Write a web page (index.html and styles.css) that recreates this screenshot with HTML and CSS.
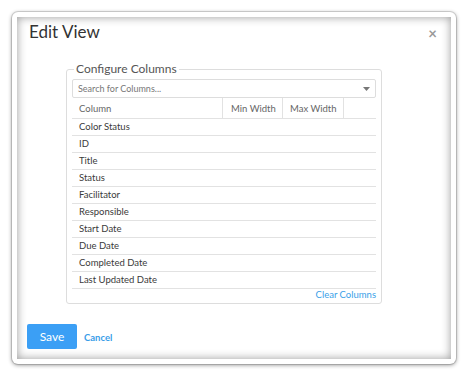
FILE: index.html
```html
<!DOCTYPE html>
<html>
<head>
<meta charset="utf-8">
<link rel="stylesheet" href="styles.css">
</head>
<body>
<div class="frame">
  <div class="modal">
    <div class="modal-header">
      <h1 class="title">Edit View</h1>
      <span class="close">&times;</span>
    </div>
    <div class="modal-body">
      <fieldset class="config">
        <legend class="legend">Configure Columns</legend>
        <div class="search">
          <span class="placeholder">Search for Columns...</span>
          <svg class="caret" width="7" height="4" viewBox="0 0 7 4"><path d="M0 0H7L3.5 4Z" fill="#777"/></svg>
        </div>
        <div class="thead">
          <div class="th th-col">Column</div>
          <div class="th th-min">Min Width</div>
          <div class="th th-max">Max Width</div>
          <div class="th th-end"></div>
        </div>
        <div class="row">Color Status</div>
        <div class="row">ID</div>
        <div class="row">Title</div>
        <div class="row">Status</div>
        <div class="row">Facilitator</div>
        <div class="row">Responsible</div>
        <div class="row">Start Date</div>
        <div class="row">Due Date</div>
        <div class="row">Completed Date</div>
        <div class="row">Last Updated Date</div>
        <div class="clear-wrap"><a class="clear">Clear Columns</a></div>
      </fieldset>
    </div>
    <div class="modal-footer">
      <button class="btn-save">Save</button>
      <a class="cancel">Cancel</a>
    </div>
  </div>
</div>
</body>
</html>
```
FILE: styles.css
```css
html, body {
  margin: 0;
  padding: 0;
  background: #ffffff;
}
body {
  padding: 12px;
  font-family: Lato, "Open Sans", sans-serif;
  color: #444;
}
.frame {
  width: 444px;
  height: 352px;
  box-sizing: border-box;
  background: #fff;
  border-radius: 6px;
  padding: 5px;
  box-shadow: 0 0 0 1px rgba(0,0,0,0.12), 0 1px 4px rgba(0,0,0,0.45);
}
.modal {
  height: 342px;
  box-sizing: border-box;
  background: #fff;
  box-shadow: inset 0 0 10px rgba(0,0,0,0.4);
  display: flex;
  flex-direction: column;
}
.modal-header {
  display: flex;
  justify-content: space-between;
  align-items: center;
  padding: 4px 14px 0 12px;
  height: 22px;
}
.title {
  margin: 0;
  font-size: 17px;
  font-weight: 400;
  color: #333;
  line-height: 22px;
}
.close {
  font-size: 15px;
  color: #999;
  font-weight: 700;
  line-height: 22px;
  margin-top: 2px;
}
.modal-body {
  padding: 19px 0 0 49px;
}
.config {
  margin: 0;
  width: 316px;
  box-sizing: border-box;
  border: 1px solid #ddd;
  border-radius: 3px;
  padding: 3px 5px 3px 5px;
  min-width: 0;
}
.legend {
  font-size: 12px;
  color: #555;
  padding: 0 2px;
  margin-left: 2px;
  line-height: 14px;
}
.search {
  height: 19px;
  box-sizing: border-box;
  border: 1px solid #ddd;
  border-radius: 2px;
  display: flex;
  align-items: center;
  justify-content: space-between;
  padding: 0 5px 0 5px;
}
.placeholder {
  font-size: 9px;
  color: #777;
}
.caret {
  display: block;
}
.thead {
  display: flex;
  height: 20px;
  border-bottom: 1px solid #e2e2e2;
}
.th {
  font-size: 9.5px;
  color: #666;
  display: flex;
  align-items: center;
  box-sizing: border-box;
}
.th-col {
  width: 151px;
  padding-left: 7px;
  border-right: 1px solid #e2e2e2;
}
.th-min {
  width: 60px;
  padding-left: 8px;
  border-right: 1px solid #e2e2e2;
}
.th-max {
  width: 61px;
  padding-left: 7px;
  border-right: 1px solid #e2e2e2;
}
.th-end {
  flex: 1;
}
.row {
  height: 16px;
  line-height: 16px;
  border-bottom: 1px solid #e2e2e2;
  font-size: 9.5px;
  color: #3a3a3a;
  padding-left: 7px;
}
.clear-wrap {
  display: flex;
  justify-content: flex-end;
  height: 11px;
}
.clear {
  font-size: 9.5px;
  color: #3a9fe8;
  line-height: 12px;
}
.modal-footer {
  margin-top: auto;
  display: flex;
  align-items: center;
  padding: 0 0 10px 10px;
}
.btn-save {
  width: 50px;
  height: 25px;
  border: none;
  border-radius: 2px;
  background: #3b9ff5;
  color: #fff;
  font-family: Lato, "Open Sans", sans-serif;
  font-size: 12px;
  padding: 0;
}
.cancel {
  margin-left: 7px;
  font-size: 9.5px;
  color: #3a9ee8;
  font-weight: 700;
  margin-top: 2px;
}
```
